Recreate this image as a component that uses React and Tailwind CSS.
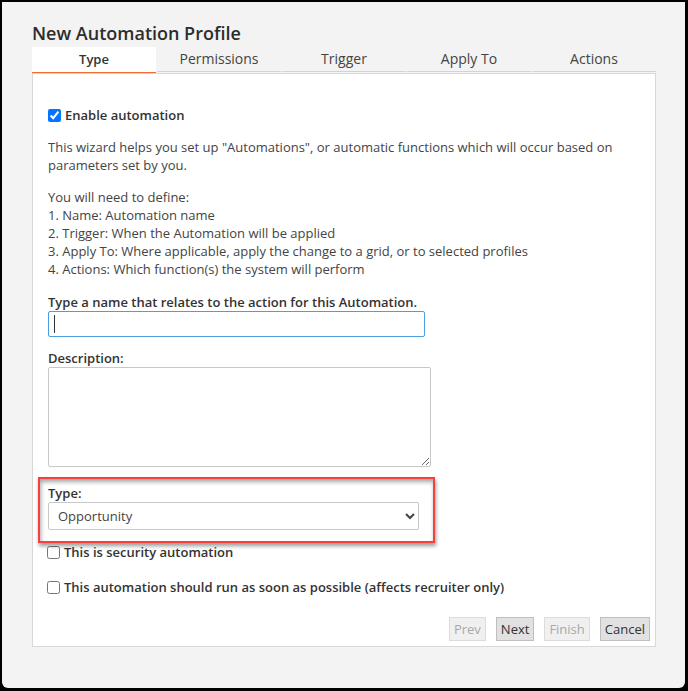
import { useState } from 'react';

const TABS = ['Type', 'Permissions', 'Trigger', 'Apply To', 'Actions'];

const STEPS = [
  'Name: Automation name',
  'Trigger: When the Automation will be applied',
  'Apply To: Where applicable, apply the change to a grid, or to selected profiles',
  'Actions: Which function(s) the system will perform',
];

function WizardButton({ children, disabled }) {
  return (
    <button
      type="button"
      disabled={disabled}
      className="h-6 px-1 border border-[#bfbfbf] bg-[#e1e1e1] text-[13px] leading-[18px] text-[#333] disabled:border-[#dcdcdc] disabled:bg-[#f0f0f0] disabled:text-[#a8a8a8]"
    >
      {children}
    </button>
  );
}

function Check({ id, label, checked, onChange }) {
  return (
    <div className="flex items-center gap-1">
      <input id={id} type="checkbox" checked={checked} onChange={onChange} className="w-[13px] h-[13px]" />
      <label htmlFor={id} className="font-semibold text-[#333]">{label}</label>
    </div>
  );
}

export default function App() {
  const [tab, setTab] = useState('Type');
  const [form, setForm] = useState({
    enabled: true,
    name: '',
    description: '',
    type: 'Opportunity',
    security: false,
    asap: false,
  });

  const set = (k) => (e) => setForm(f => ({ ...f, [k]: e.target.value }));
  const toggle = (k) => (e) => setForm(f => ({ ...f, [k]: e.target.checked }));

  return (
    <div className="min-h-screen flex bg-black pt-0.5 pl-0.5 pr-[3px] pb-[3px] font-['Open_Sans','Noto_Sans',sans-serif] text-[13px] leading-[18px] text-[#444]">
      <div className="flex-1 rounded-b-md bg-[#f3f3f3] pl-[30px] pr-[29px] pt-[18px] pb-10">
        <h1 className="text-lg leading-[27px] font-semibold text-[#2d2d2d]">New Automation Profile</h1>

        {/* Tabs */}
        <div role="tablist" className="flex gap-px">
          {TABS.map(t => (
            <button
              key={t}
              type="button"
              role="tab"
              aria-selected={t === tab}
              onClick={() => setTab(t)}
              className={
                t === tab
                  ? 'flex-1 h-[26px] pb-0.5 bg-white border-b border-[#f26a2e] font-semibold text-[13px] text-[#333]'
                  : 'flex-1 h-[25px] border-b border-[#d3d3d3] text-sm text-[#444]'
              }
            >
              {t}
            </button>
          ))}
        </div>

        {/* Panel */}
        <div className="border border-[#d8d8d8] bg-white pl-[15px] pr-[5px] pt-8 pb-[5px]">
          <Check id="enabled" label="Enable automation" checked={form.enabled} onChange={toggle('enabled')} />

          <p className="mt-[14px] pr-8">
            This wizard helps you set up "Automations", or automatic functions which will occur based on parameters set by you.
          </p>

          <p className="mt-[14px]">You will need to define:</p>
          <ol>
            {STEPS.map((s, i) => (
              <li key={s}>{i + 1}. {s}</li>
            ))}
          </ol>

          <label htmlFor="name" className="block mt-[15px] font-semibold text-[#333]">
            Type a name that relates to the action for this Automation.
          </label>
          <div className="relative max-w-[377px]">
            <input
              id="name"
              type="text"
              value={form.name}
              onChange={set('name')}
              className="block w-full h-[26px] px-[5px] border border-[#4a9fe0] rounded-xs bg-white outline-none"
            />
            {form.name === '' && <span className="absolute left-1.5 top-1 h-[18px] w-px bg-[#333] pointer-events-none" />}
          </div>

          <label htmlFor="description" className="block mt-3 font-semibold text-[#333]">Description:</label>
          <textarea
            id="description"
            value={form.description}
            onChange={set('description')}
            className="block w-full max-w-[383px] h-[100px] p-1 border border-[#c8c8c8] rounded-xs resize outline-none"
          />

          {/* Type field with its callout frame */}
          <div className="relative mt-[17px] max-w-[371px]">
            <label htmlFor="type" className="block font-semibold text-[#333]">Type:</label>
            <select
              id="type"
              value={form.type}
              onChange={set('type')}
              className="block w-full h-7 px-[5px] border border-[#c8c8c8] rounded-xs bg-white outline-none"
            >
              <option>Opportunity</option>
            </select>
            <div className="absolute -left-[10px] -right-4 -top-[7px] -bottom-[13px] border-2 border-[#f93e3e] pointer-events-none shadow-[1px_3px_4px_rgba(0,0,0,0.4),inset_1px_3px_4px_rgba(0,0,0,0.35)]" />
          </div>

          <div className="mt-[13px] -ml-px flex flex-col gap-[17px]">
            <Check id="security" label="This is security automation" checked={form.security} onChange={toggle('security')} />
            <Check
              id="asap"
              label="This automation should run as soon as possible (affects recruiter only)"
              checked={form.asap}
              onChange={toggle('asap')}
            />
          </div>

          <div className="mt-[21px] flex justify-end gap-[10px]">
            <WizardButton disabled>Prev</WizardButton>
            <WizardButton>Next</WizardButton>
            <WizardButton disabled>Finish</WizardButton>
            <WizardButton>Cancel</WizardButton>
          </div>
        </div>
      </div>
    </div>
  );
}
